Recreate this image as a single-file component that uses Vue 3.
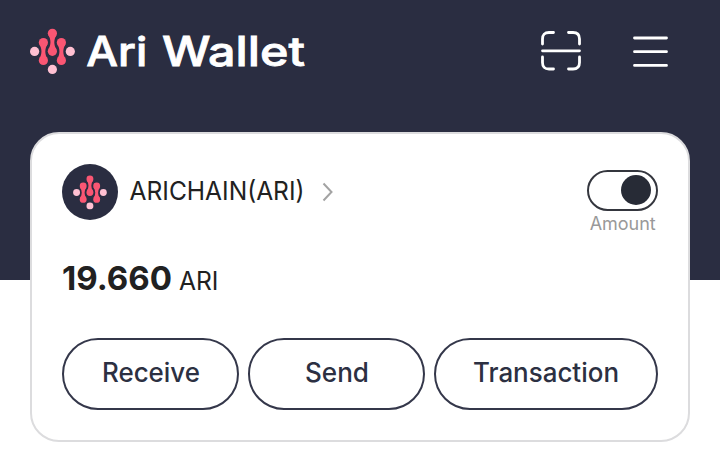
<script setup>
import { ref } from 'vue'

const actions = [
  { label: 'Receive', length: 98, wide: false },
  { label: 'Send', length: 64, wide: false },
  { label: 'Transaction', length: 146, wide: true },
]
const shown = ref(true)
const columns = [
  { x: 13.4, y: 14.5 },
  { x: 22.4, y: 5.3 },
  { x: 31.4, y: 14.5 },
]
const link = (c) =>
  `M${c.x - 4.1} ${c.y + 2}C${c.x - 1.2} ${c.y + 6} ${c.x - 1.2} ${c.y + 12} ${c.x - 4.1} ${c.y + 16}H${c.x + 4.1}C${c.x + 1.2} ${c.y + 12} ${c.x + 1.2} ${c.y + 6} ${c.x + 4.1} ${c.y + 2}Z`
</script>

<template>
  <div class="page">
    <svg class="defs" width="0" height="0">
      <symbol id="ari-mark" viewBox="0 0 45 46">
        <g fill="#fa5673">
          <template v-for="c in columns" :key="c.x">
            <circle :cx="c.x" :cy="c.y" r="4.6" />
            <circle :cx="c.x" :cy="c.y + 18" r="4.6" />
            <path :d="link(c)" />
          </template>
        </g>
        <g fill="#ffc0d2">
          <circle cx="4.6" cy="23.4" r="4.6" />
          <circle cx="40.3" cy="23.4" r="4.6" />
          <circle cx="22.4" cy="41.4" r="4.6" />
        </g>
      </symbol>
    </svg>

    <header class="header">
      <div class="bar">
        <svg class="mark"><use href="#ari-mark" /></svg>
        <svg class="wordmark" viewBox="0 0 224 46">
          <text x="0.3" y="38.2" textLength="61" lengthAdjust="spacingAndGlyphs">Ari</text>
          <text x="76" y="38.2" textLength="143" lengthAdjust="spacingAndGlyphs">Wallet</text>
        </svg>
        <svg class="scan" viewBox="0 0 40 40">
          <path d="M1.5 13V8Q1.5 1.5 8 1.5H12.5M27.5 1.5H32Q38.5 1.5 38.5 8V13M38.5 26V31.5Q38.5 38 32 38H27.5M12.5 38H8Q1.5 38 1.5 31.5V26M1.5 19.8H38.5" />
        </svg>
        <svg class="menu" viewBox="0 0 36 40">
          <path d="M1.5 6H33.5M1.5 19.7H33.5M1.5 33.4H33.5" />
        </svg>
      </div>
    </header>

    <main class="card">
      <div class="account">
        <div class="avatar"><svg><use href="#ari-mark" /></svg></div>
        <svg class="name" viewBox="0 0 176 40">
          <text x="0.5" y="28.4" textLength="175" lengthAdjust="spacingAndGlyphs">ARICHAIN(ARI)</text>
        </svg>
        <svg class="chevron" viewBox="0 0 12 20"><path d="M1.5 1.5L9.5 10L1.5 18.5" /></svg>
        <div class="visibility">
          <button class="toggle" :class="{ on: shown }" aria-label="Amount" @click="shown = !shown">
            <span class="knob"></span>
          </button>
          <svg class="caption" viewBox="0 0 68 24">
            <text x="1.7" y="17.3" textLength="66">Amount</text>
          </svg>
        </div>
      </div>

      <svg class="balance" viewBox="0 0 170 40">
        <text class="value" x="0" y="29" textLength="110" lengthAdjust="spacingAndGlyphs">19.660</text>
        <text class="unit" x="117" y="29" textLength="39.5" lengthAdjust="spacingAndGlyphs">ARI</text>
      </svg>

      <div class="actions">
        <button v-for="a in actions" :key="a.label" class="action" :class="{ wide: a.wide }">
          <svg :width="a.length" height="36">
            <text x="0" y="27" :textLength="a.length" lengthAdjust="spacingAndGlyphs">{{ a.label }}</text>
          </svg>
        </button>
      </div>
    </main>
  </div>
</template>

<style>
body {
  background: #fff;
}
</style>

<style scoped>
.page {
  height: 469px;
  overflow: hidden;
  font-family: Inter, "Liberation Sans", sans-serif;
}
.page * {
  box-sizing: border-box;
}
.page svg {
  display: block;
  flex: none;
  overflow: visible;
}
.page .defs {
  position: absolute;
}
.header {
  height: 280px;
  padding: 28px 51px 0 30px;
  background: #2a2d41;
}
.bar {
  display: flex;
  align-items: flex-start;
}
.mark {
  width: 45px;
  height: 46px;
}
.wordmark {
  width: 224px;
  height: 46px;
  margin-left: 11px;
  fill: #fff;
  stroke: #fff;
  stroke-width: 0.8;
  font-size: 40.5px;
  font-weight: 500;
}
.scan,
.menu {
  fill: none;
  stroke: #fff;
  stroke-width: 2.8;
  stroke-linecap: round;
}
.scan {
  width: 40px;
  height: 40px;
  margin: 3px 0 0 auto;
}
.menu {
  width: 36px;
  height: 40px;
  margin: 3.5px 0 0 52.5px;
}
.card {
  position: relative;
  width: 660px;
  height: 310px;
  margin: -148px auto 0;
  padding: 30px 30px 0;
  border: 2px solid #dcdcde;
  border-radius: 29px;
  background: #fff;
}
.account {
  display: flex;
  height: 76px;
}
.avatar {
  display: flex;
  align-items: center;
  justify-content: center;
  width: 56px;
  height: 56px;
  border-radius: 50%;
  background: #2a2d41;
}
.avatar svg {
  width: 34px;
  height: 34.5px;
}
.name {
  width: 176px;
  height: 40px;
  margin: 8px 0 0 11px;
  fill: #212121;
  font-size: 26px;
}
.chevron {
  width: 12px;
  height: 20px;
  margin: 18px 0 0 17px;
  fill: none;
  stroke: #a3a3a3;
  stroke-width: 2;
}
.visibility {
  display: flex;
  flex-direction: column;
  align-items: flex-end;
  margin: 6px 0 0 auto;
}
.toggle {
  display: flex;
  align-items: center;
  width: 71px;
  height: 41px;
  padding: 0 5.5px;
  border: 2px solid #34363e;
  border-radius: 21px;
  background: #fff;
}
.toggle.on {
  justify-content: flex-end;
}
.knob {
  width: 30px;
  height: 30px;
  margin-bottom: 1px;
  border-radius: 50%;
  background: #272b36;
}
.caption {
  width: 68px;
  height: 24px;
  margin: 2px 2px 0 0;
  fill: #999;
  font-size: 18px;
}
.balance {
  width: 170px;
  height: 40px;
  margin-top: 21px;
  fill: #212121;
}
.value {
  font-size: 33px;
  font-weight: 700;
}
.unit {
  font-size: 25.5px;
}
.actions {
  display: flex;
  gap: 9px;
  margin-top: 37px;
}
.action {
  display: flex;
  align-items: center;
  justify-content: center;
  width: 177px;
  height: 72px;
  padding: 0 0 2px;
  border: 2px solid #34374a;
  border-radius: 36px;
  background: #fff;
  font-family: inherit;
  font-size: 26.5px;
  font-weight: 500;
  fill: #2c3042;
}
.action.wide {
  width: 224px;
}
</style>
